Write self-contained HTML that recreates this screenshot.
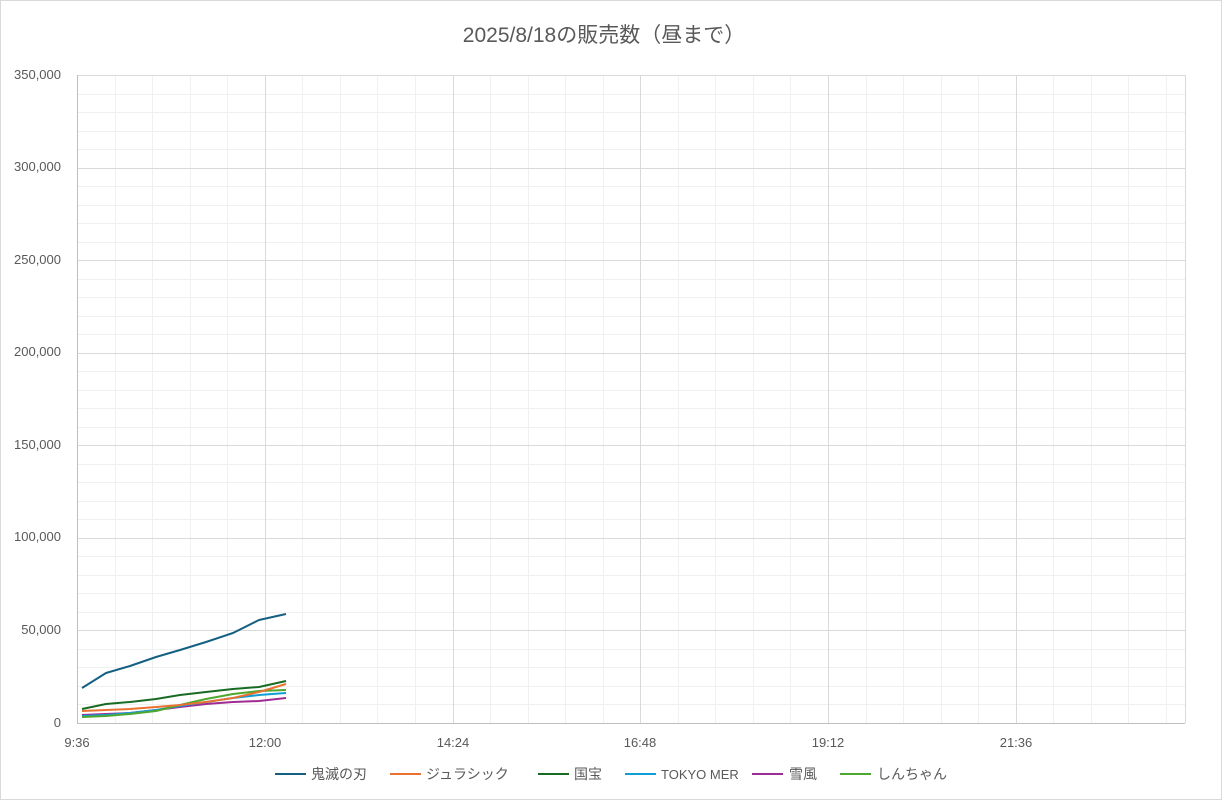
<!DOCTYPE html>
<html><head><meta charset="utf-8"><style>
body{margin:0;background:#fff;}
svg{display:block;font-family:"Liberation Sans","Noto Sans CJK JP",sans-serif;}
</style></head><body>
<svg width="1227" height="801" viewBox="0 0 1227 801">
<rect x="0.5" y="0.5" width="1221" height="799" fill="#fff" stroke="#d9d9d9"/>
<text x="604" y="42" text-anchor="middle" font-size="21" fill="#595959">2025/8/18の販売数（昼まで）</text>
<g stroke="#efefef" stroke-width="1" id="minor"></g>
<g id="grid"></g>
<g id="lines" fill="none" stroke-width="2" stroke-linejoin="round"></g>
<g font-size="13" fill="#595959" text-anchor="end">
<text x="61" y="79">350,000</text><text x="61" y="171">300,000</text><text x="61" y="264">250,000</text><text x="61" y="356">200,000</text><text x="61" y="449">150,000</text><text x="61" y="541">100,000</text><text x="61" y="634">50,000</text><text x="61" y="727">0</text>
</g>
<g font-size="13" fill="#595959" text-anchor="middle">
<text x="77" y="747">9:36</text><text x="265" y="747">12:00</text><text x="453" y="747">14:24</text><text x="640" y="747">16:48</text><text x="828" y="747">19:12</text><text x="1016" y="747">21:36</text>
</g>
<g font-size="14" fill="#595959">
<line x1="275" y1="774" x2="306" y2="774" stroke="#156082" stroke-width="2"/><text x="311" y="779">鬼滅の刃</text>
<line x1="390" y1="774" x2="421" y2="774" stroke="#e97132" stroke-width="2"/><text x="426" y="779">ジュラシック</text>
<line x1="538" y1="774" x2="569" y2="774" stroke="#196b24" stroke-width="2"/><text x="574" y="779">国宝</text>
<line x1="625" y1="774" x2="656" y2="774" stroke="#0f9ed5" stroke-width="2"/><text x="661" y="779" font-size="13">TOKYO MER</text>
<line x1="752" y1="774" x2="783" y2="774" stroke="#a02b93" stroke-width="2"/><text x="789" y="779">雪風</text>
<line x1="840" y1="774" x2="871" y2="774" stroke="#4ea72e" stroke-width="2"/><text x="877" y="779">しんちゃん</text>
</g>
</svg>
<script>
const ns="http://www.w3.org/2000/svg";
function L(g,x1,y1,x2,y2,c){const l=document.createElementNS(ns,"line");l.setAttribute("x1",x1);l.setAttribute("y1",y1);l.setAttribute("x2",x2);l.setAttribute("y2",y2);l.setAttribute("stroke",c);l.setAttribute("stroke-width",1);g.appendChild(l);}
const mi=document.getElementById("minor"),gr=document.getElementById("grid");
const x0=77,x1=1185,y0=75,y1=723,dx=187.75/5,dy=(y1-y0)/35;
for(let i=1;i<35;i++){if(i%5)L(mi,x0,Math.round(y0+i*dy)+.5,x1,Math.round(y0+i*dy)+.5,"#f0f0f0");}
for(let i=1;x0+i*dx<=x1+0.5;i++){if(i%5)L(mi,Math.round(x0+i*dx)+.5,y0,Math.round(x0+i*dx)+.5,y1,"#f0f0f0");}
for(let i=0;i<7;i++)L(gr,x0,Math.round(y0+i*5*dy)+.5,x1,Math.round(y0+i*5*dy)+.5,"#d9d9d9");
for(let i=1;x0+i*5*dx<=x1;i++)L(gr,Math.round(x0+i*5*dx)+.5,y0,Math.round(x0+i*5*dx)+.5,y1,"#d9d9d9");
L(gr,x1+.5,y0,x1+.5,y1,"#d9d9d9");
L(gr,x0+.5,y0,x0+.5,y1,"#bfbfbf");L(gr,x0,y1+.5,x1,y1+.5,"#bfbfbf");
const xs=[82,106,130,156,180,206,233,259,286];
const S=[["#a02b93",[715,714,713,710,707,704,702,701,698]],["#0f9ed5",[716,715,713,710,706,702,698,695,693]],["#4ea72e",[717,716,714,711,705,699,694,691,690]],["#e97132",[711,710,709,707,705,702,698,692,684]],["#196b24",[709,704,702,699,695,692,689,687,681]],["#156082",[688,673,666,657,650,642,633,620,614]]];
const lg=document.getElementById("lines");
S.forEach(([c,ys])=>{const p=document.createElementNS(ns,"polyline");p.setAttribute("points",xs.map((x,i)=>x+","+ys[i]).join(" "));p.setAttribute("stroke",c);lg.appendChild(p);});
</script>
</body></html>
